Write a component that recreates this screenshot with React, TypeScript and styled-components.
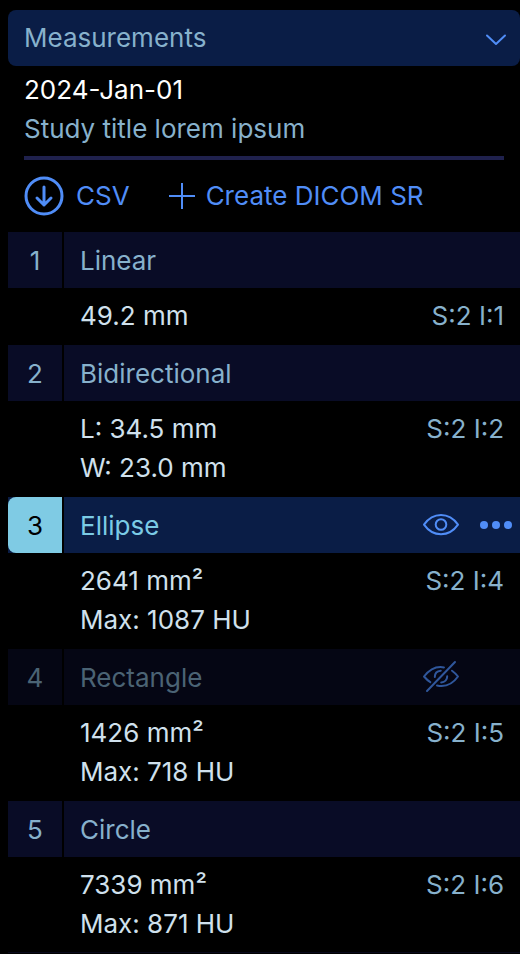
import React from 'react';
import styled, { createGlobalStyle } from 'styled-components';

const Global = createGlobalStyle`
  body { margin: 0; background: #000; font-family: Inter, sans-serif; font-size: 26px; overflow: hidden; }
  * { box-sizing: border-box; }
`;
const Panel = styled.main`
  width: 520px; height: 954px; padding: 10px 0 0 8px; overflow: hidden; background: #000;
`;
const Header = styled.header`
  height: 56px; padding: 0 13px 0 16px; display: flex; align-items: center; justify-content: space-between;
  background: #0a1d46; border-radius: 8px; color: #87b1cc;
`;
const HeaderTitle = styled.span`padding-bottom: 2px;`;
const Chevron = styled.svg`margin-top: 3px;`;
const Study = styled.section`
  margin: 0 16px; height: 94px; padding-top: 4px; border-bottom: 4px solid #1f214d;
  line-height: 39px; color: #87b1cc;
`;
const StudyDate = styled.div`color: #fff;`;
const Actions = styled.div`
  height: 72px; padding-left: 16px; display: flex; align-items: center; color: #508df7;
`;
const Action = styled.button<{ $gap: number; $after?: number }>`
  border: 0; padding: 0; background: none; color: inherit; font: inherit; display: flex; align-items: center;
  gap: ${p => p.$gap}px; margin-right: ${p => p.$after ?? 0}px;
`;
const ActionLabel = styled.span`padding-bottom: 2px;`;
const Item = styled.article`margin-bottom: 1px;`;
const ItemHead = styled.div<{ $state?: string }>`
  height: 56px; display: grid; grid-template-columns: 54px 1fr; gap: 2px; line-height: 58px;
  color: ${p => p.$state === 'active' ? '#7bcbe5' : p.$state === 'hidden' ? '#4b6374' : '#87b1cc'};
`;
const Index = styled.div<{ $state?: string }>`
  height: 56px; text-align: center; border-radius: ${p => p.$state === 'active' ? '8px 0 0 8px' : '0'};
  background: ${p => p.$state === 'active' ? '#7fcbe4' : p.$state === 'hidden' ? '#050614' : '#090c26'};
  color: ${p => p.$state === 'active' ? '#000' : 'inherit'};
`;
const IndexCell = styled.div<{ $state?: string }>`
  height: 56px; background: ${p => p.$state === 'active' ? '#0a1d46' : 'transparent'};
`;
const Title = styled.div<{ $state?: string }>`
  height: 56px; padding-left: 16px; display: flex; justify-content: space-between;
  background: ${p => p.$state === 'active' ? '#0a1d46' : p.$state === 'hidden' ? '#050614' : '#090c26'};
`;
const Tools = styled.div<{ $state?: string }>`
  height: 56px; width: 98px; display: flex; align-items: center; gap: 19px;
  color: ${p => p.$state === 'hidden' ? '#2f569b' : '#508df7'};
`;
const Details = styled.div`
  padding: 8px 16px 9px 72px; display: flex; justify-content: space-between; line-height: 39px; color: #d0e1ed;
`;
const Location = styled.div`color: #87b1cc;`;
const ListEnd = styled.div`
  height: 1px; margin-top: -1px; background: #07071a;
`;

const Eye = () => (
  <svg width="38" height="36" viewBox="0 0 38 36" fill="none" stroke="currentColor" strokeWidth="2" strokeLinejoin="round">
    <path d="M2 17.600C6.500 11.300 12.500 8 19 8s12.500 3.300 17 9.600C31.500 24 25.500 27.200 19 27.200S6.500 24 2 17.600Z" />
    <circle cx="19" cy="17.500" r="5.300" />
  </svg>
);
const EyeOff = () => (
  <svg width="38" height="36" viewBox="0 0 38 36" fill="none" stroke="currentColor" strokeWidth="2" strokeLinecap="round" strokeLinejoin="round">
    <path d="M5 32 33 3M22 8.400C14 6.800 7.500 10.500 2 17.500q3 3.500 6.300 5.600M30 11.700q3.500 2.500 6 5.800C31 24.500 24 28.500 15 26.500M12.800 18c0-3.600 2.200-6 6-6.300M25.200 17.300c0 3.500-2.400 6-6 6.100" />
  </svg>
);
const Dots = () => (
  <svg width="34" height="10" viewBox="0 0 34 10" fill="currentColor">
    <circle cx="5" cy="5" r="4" /><circle cx="17" cy="5" r="4" /><circle cx="29" cy="5" r="4" />
  </svg>
);

const items = [
  { name: 'Linear', lines: ['49.2 mm'], at: 'S:2 I:1' },
  { name: 'Bidirectional', lines: ['L: 34.5 mm', 'W: 23.0 mm'], at: 'S:2 I:2' },
  { name: 'Ellipse', lines: ['2641 mm²', 'Max: 1087 HU'], at: 'S:2 I:4', state: 'active' },
  { name: 'Rectangle', lines: ['1426 mm²', 'Max: 718 HU'], at: 'S:2 I:5', state: 'hidden' },
  { name: 'Circle', lines: ['7339 mm²', 'Max: 871 HU'], at: 'S:2 I:6' },
];

export default function App() {
  return <><Global /><Panel>
    <Header><HeaderTitle>Measurements</HeaderTitle>
      <Chevron width="22" height="14" viewBox="0 0 22 14" fill="none" stroke="#508df7" strokeWidth="2" strokeLinecap="round" strokeLinejoin="round"><path d="m2 2.500 9 8.500 9-8.500" /></Chevron>
    </Header>
    <Study><StudyDate>2024-Jan-01</StudyDate><div>Study title lorem ipsum</div></Study>
    <Actions>
      <Action $gap={12} $after={39}>
        <svg width="40" height="40" viewBox="0 0 40 40" fill="none" stroke="currentColor" strokeWidth="3" strokeLinecap="round" strokeLinejoin="round"><circle cx="20" cy="20" r="18" /><path d="M20 11v18m-7-7 7 7 7-7" /></svg><ActionLabel>CSV</ActionLabel>
      </Action>
      <Action $gap={11}>
        <svg width="26" height="26" viewBox="0 0 26 26" stroke="currentColor" strokeWidth="2"><path d="M13 0v26M0 13h26" /></svg><ActionLabel>Create DICOM SR</ActionLabel>
      </Action>
    </Actions>
    {items.map((m, i) => <Item key={m.name}>
      <ItemHead $state={m.state}><IndexCell $state={m.state}><Index $state={m.state}>{i + 1}</Index></IndexCell>
        <Title $state={m.state}><span>{m.name}</span>{m.state && <Tools $state={m.state}>{m.state === 'hidden' ? <EyeOff /> : <><Eye /><Dots /></>}</Tools>}</Title>
      </ItemHead>
      <Details><div>{m.lines.map(l => <div key={l}>{l}</div>)}</div><Location>{m.at}</Location></Details>
    </Item>)}
    <ListEnd />
  </Panel></>;
}
